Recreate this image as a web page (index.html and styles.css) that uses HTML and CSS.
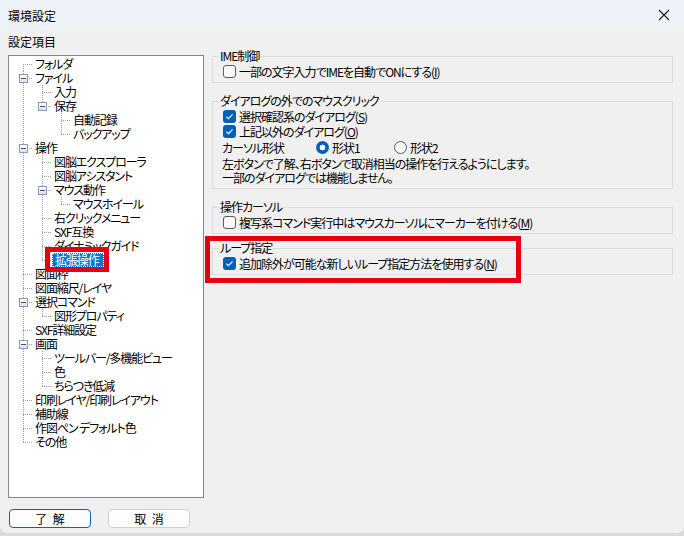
FILE: index.html
```html
<!DOCTYPE html>
<html lang="ja">
<head>
    <meta charset="UTF-8">
    <title>環境設定</title>
    <link rel="stylesheet" href="styles.css">
</head>
<body>
    <div class="window">
        <div class="titlebar">
            <span class="title">環境設定</span>
            <svg class="close" width="12" height="12" viewBox="0 0 12 12">
                <path d="M1 1 L11 11 M11 1 L1 11" stroke="#1a1a1a" stroke-width="1.1" fill="none"/>
            </svg>
        </div>

        <div class="main">
            <div class="left">
                <div class="caption">設定項目</div>
                <div class="tree">
                    <div class="row"><span class="c first"></span><span class="label">フォルダ</span></div>
                    <div class="row"><span class="c tee"><i class="exp"></i></span><span class="label">ファイル</span></div>
                    <div class="row"><span class="c pipe"></span><span class="c tee"></span><span class="label">入力</span></div>
                    <div class="row"><span class="c pipe"></span><span class="c end"><i class="exp"></i></span><span class="label">保存</span></div>
                    <div class="row"><span class="c pipe"></span><span class="c"></span><span class="c tee"></span><span class="label">自動記録</span></div>
                    <div class="row"><span class="c pipe"></span><span class="c"></span><span class="c end"></span><span class="label">バックアップ</span></div>
                    <div class="row"><span class="c tee"><i class="exp"></i></span><span class="label">操作</span></div>
                    <div class="row"><span class="c pipe"></span><span class="c tee"></span><span class="label">図脳エクスプローラ</span></div>
                    <div class="row"><span class="c pipe"></span><span class="c tee"></span><span class="label">図脳アシスタント</span></div>
                    <div class="row"><span class="c pipe"></span><span class="c tee"><i class="exp"></i></span><span class="label">マウス動作</span></div>
                    <div class="row"><span class="c pipe"></span><span class="c pipe"></span><span class="c end"></span><span class="label">マウスホイール</span></div>
                    <div class="row"><span class="c pipe"></span><span class="c tee"></span><span class="label">右クリックメニュー</span></div>
                    <div class="row"><span class="c pipe"></span><span class="c tee"></span><span class="label">SXF互換</span></div>
                    <div class="row"><span class="c pipe"></span><span class="c tee"></span><span class="label">ダイナミックガイド</span></div>
                    <div class="row"><span class="c pipe"></span><span class="c end"></span><span class="label selected">拡張操作</span></div>
                    <div class="row"><span class="c tee"></span><span class="label">図面枠</span></div>
                    <div class="row"><span class="c tee"></span><span class="label">図面縮尺/レイヤ</span></div>
                    <div class="row"><span class="c tee"><i class="exp"></i></span><span class="label">選択コマンド</span></div>
                    <div class="row"><span class="c pipe"></span><span class="c end"></span><span class="label">図形プロパティ</span></div>
                    <div class="row"><span class="c tee"></span><span class="label">SXF詳細設定</span></div>
                    <div class="row"><span class="c tee"><i class="exp"></i></span><span class="label">画面</span></div>
                    <div class="row"><span class="c pipe"></span><span class="c tee"></span><span class="label">ツールバー/多機能ビュー</span></div>
                    <div class="row"><span class="c pipe"></span><span class="c tee"></span><span class="label">色</span></div>
                    <div class="row"><span class="c pipe"></span><span class="c end"></span><span class="label">ちらつき低減</span></div>
                    <div class="row"><span class="c tee"></span><span class="label">印刷レイヤ/印刷レイアウト</span></div>
                    <div class="row"><span class="c tee"></span><span class="label">補助線</span></div>
                    <div class="row"><span class="c tee"></span><span class="label">作図ペン&nbsp;デフォルト色</span></div>
                    <div class="row"><span class="c end"></span><span class="label">その他</span></div>

                    <div class="mark mark-tree"></div>
                </div>
                <div class="buttons">
                    <button class="btn default">了&nbsp;&nbsp;解</button>
                    <button class="btn">取&nbsp;&nbsp;消</button>
                </div>
            </div>

            <div class="right">
                <fieldset class="group">
                    <legend>IME制御</legend>
                    <div class="opt"><span class="check"></span>一部の文字入力でIMEを自動でONにする(<u>I</u>)</div>
                </fieldset>

                <fieldset class="group">
                    <legend>ダイアログの外でのマウスクリック</legend>
                    <div class="opt"><span class="check on"><svg width="13" height="13" viewBox="0 0 13 13"><path d="M3.4 6.7 L5.5 8.7 L9.6 4.4" stroke="#fff" stroke-width="1.2" fill="none"/></svg></span>選択確認系のダイアログ(<u>S</u>)</div>
                    <div class="opt"><span class="check on"><svg width="13" height="13" viewBox="0 0 13 13"><path d="M3.4 6.7 L5.5 8.7 L9.6 4.4" stroke="#fff" stroke-width="1.2" fill="none"/></svg></span>上記以外のダイアログ(<u>O</u>)</div>
                    <div class="opt radios">
                        <span class="radio-label">カーソル形状</span>
                        <span class="radio-item"><span class="radio on"></span>形状1</span>
                        <span class="radio-item"><span class="radio"></span>形状2</span>
                    </div>
                    <p class="note">左ボタンで了解、右ボタンで取消相当の操作を行えるようにします。<br>一部のダイアログでは機能しません。</p>
                </fieldset>

                <fieldset class="group">
                    <legend>操作カーソル</legend>
                    <div class="opt"><span class="check"></span>複写系コマンド実行中はマウスカーソルにマーカーを付ける(<u>M</u>)</div>
                </fieldset>

                <fieldset class="group loop">
                    <legend>ループ指定</legend>
                    <div class="opt"><span class="check on"><svg width="13" height="13" viewBox="0 0 13 13"><path d="M3.4 6.7 L5.5 8.7 L9.6 4.4" stroke="#fff" stroke-width="1.2" fill="none"/></svg></span>追加除外が可能な新しいループ指定方法を使用する(<u>N</u>)</div>
                </fieldset>
            </div>
        </div>

        <div class="mark mark-panel"></div>
    </div>
</body>
</html>
```

FILE: styles.css
```css
body {
    margin: 0;
    width: 684px;
    height: 536px;
    overflow: hidden;
    background-color: #dadada;
    font-family: "Noto Sans CJK JP", "Noto Sans", sans-serif;
    font-size: 12px;
    color: #000;
}
.window {
    position: relative;
    height: 533px;
    background-color: #f0f0f0;
    border-radius: 0 0 7px 7px;
}
.titlebar {
    height: 30px;
    display: flex;
    align-items: center;
    justify-content: space-between;
    padding: 0 14px 0 8px;
    background-color: #eef3f9;
}
.title {
    font-size: 12px;
}
.main {
    display: grid;
    grid-template-columns: 196px 1fr;
    column-gap: 8px;
    padding: 0 11px 0 8px;
}
.caption {
    height: 14px;
    line-height: 14px;
    margin-top: 5px;
    margin-bottom: 6px;
}
.tree {
    position: relative;
    height: 443px;
    box-sizing: border-box;
    border: 1px solid #828790;
    background-color: #fff;
    padding: 1px 0 0 5px;
    font-feature-settings: "palt";
    letter-spacing: -1.1px;
}
.row {
    display: flex;
    height: 14px;
}
.c {
    flex: none;
    width: 19px;
    height: 14px;
}
.pipe {
    background: repeating-linear-gradient(to bottom, #a0a0a0 0 1px, transparent 1px 2px) 9px 0 / 1px 14px no-repeat;
}
.tee {
    background:
        repeating-linear-gradient(to right, #a0a0a0 0 1px, transparent 1px 2px) 9px 7px / 10px 1px no-repeat,
        repeating-linear-gradient(to bottom, #a0a0a0 0 1px, transparent 1px 2px) 9px 0 / 1px 14px no-repeat;
}
.end {
    background:
        repeating-linear-gradient(to right, #a0a0a0 0 1px, transparent 1px 2px) 9px 7px / 10px 1px no-repeat,
        repeating-linear-gradient(to bottom, #a0a0a0 0 1px, transparent 1px 2px) 9px 0 / 1px 8px no-repeat;
}
.first {
    background:
        repeating-linear-gradient(to right, #a0a0a0 0 1px, transparent 1px 2px) 9px 7px / 10px 1px no-repeat,
        repeating-linear-gradient(to bottom, #a0a0a0 0 1px, transparent 1px 2px) 9px 7px / 1px 7px no-repeat;
}
.exp {
    display: block;
    width: 9px;
    height: 9px;
    box-sizing: border-box;
    margin: 3px 0 0 5px;
    border: 1px solid #8f9ba9;
    background:
        linear-gradient(#2b5797, #2b5797) center / 5px 1px no-repeat,
        linear-gradient(#ffffff, #d9e2ee);
}
.label {
    padding: 0 2px;
    line-height: 14px;
    white-space: nowrap;
}
.selected {
    padding: 0 5px 0 3px;
    background-color: #0078d7;
    color: #fff;
    outline: 1px dotted #fff;
    outline-offset: -1px;
}
.buttons {
    display: flex;
    gap: 17px;
    margin-top: 11px;
    padding-left: 1px;
}
.btn {
    width: 82px;
    height: 19px;
    padding: 0;
    box-sizing: border-box;
    border: 1px solid #d0d0d0;
    border-radius: 4px;
    background-color: #fdfdfd;
    font-family: inherit;
    font-size: 12px;
    line-height: 16px;
    color: #000;
}
.btn.default {
    border-color: #0067c0;
}
.right {
    padding-top: 19px;
    font-feature-settings: "palt";
    letter-spacing: -1px;
}
.group {
    margin: 11px 0 0 0;
    padding: 1px 10px 3px 10px;
    border: 1px solid #dcdcdc;
    min-width: 0;
}
.group:first-child {
    margin-top: 0;
}
.group.loop {
    margin-top: 7px;
}
.group legend {
    padding: 0 1px;
    margin-left: -4px;
    line-height: 14px;
}
.opt {
    display: flex;
    align-items: center;
    height: 15px;
    white-space: nowrap;
}
.check {
    flex: none;
    width: 13px;
    height: 13px;
    box-sizing: border-box;
    margin-right: 3px;
    border: 1px solid #5a5a5a;
    border-radius: 3px;
    background-color: #fbfbfb;
}
.check.on {
    border: none;
    background-color: #005fb8;
}
.check svg {
    display: block;
}
.radios {
    margin-top: 1px;
    margin-left: -1px;
}
.radio-label {
    width: 94px;
}
.radio-item {
    display: flex;
    align-items: center;
    width: 78px;
}
.radio {
    width: 13px;
    height: 13px;
    box-sizing: border-box;
    margin-right: 3px;
    border: 1px solid #5a5a5a;
    border-radius: 50%;
    background-color: #f7f7f7;
}
.radio.on {
    border: none;
    background: radial-gradient(circle, #fff 0 2.6px, #005fb8 3.2px);
}
.note {
    margin: 2px 0 0 -1px;
    line-height: 14px;
}
.mark {
    position: absolute;
    box-sizing: border-box;
    border: 5px solid #e60012;
}
.mark-tree {
    left: 36px;
    top: 191px;
    width: 64px;
    height: 25px;
}
.mark-panel {
    left: 205px;
    top: 236px;
    width: 316px;
    height: 47px;
}
```
